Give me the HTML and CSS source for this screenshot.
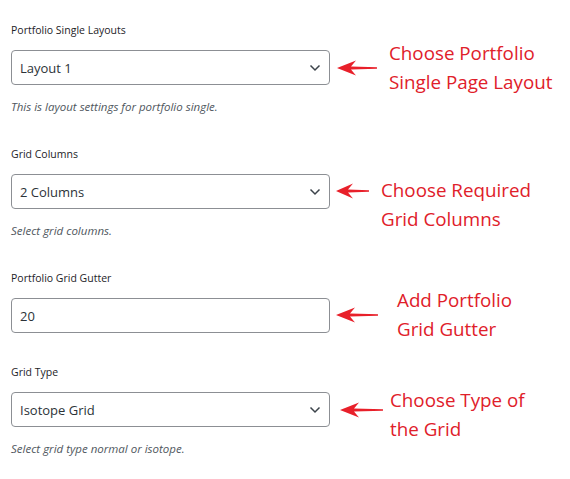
FILE: index.html
```html
<!DOCTYPE html>
<html lang="en">
<head>
  <meta charset="UTF-8" />
  <title>Portfolio Settings</title>
  <link rel="stylesheet" href="styles.css">
</head>
<body>

  <div class="settings">

    <div class="row row-layout">
      <div class="field">
        <label class="field-label">Portfolio Single Layouts</label>
        <div class="control">
          <span class="value">Layout 1</span>
          <svg class="chevron" width="12" height="8" viewBox="0 0 12 8"><path d="M1.5 1.5 L6 6 L10.5 1.5" fill="none" stroke="#3c434a" stroke-width="1.5"/></svg>
        </div>
        <p class="help">This is layout settings for portfolio single.</p>
      </div>
      <div class="note note-layout">
        <svg class="arrow" width="40" height="16" viewBox="0 0 40 16"><path d="M0 8 L19 0.5 L14 6.6 L40 7.2 L40 8.8 L14 9.4 L19 15.5 Z" fill="#e8202a"/></svg>
        <p>Choose Portfolio<br>Single Page Layout</p>
      </div>
    </div>

    <div class="row row-columns">
      <div class="field">
        <label class="field-label">Grid Columns</label>
        <div class="control">
          <span class="value">2 Columns</span>
          <svg class="chevron" width="12" height="8" viewBox="0 0 12 8"><path d="M1.5 1.5 L6 6 L10.5 1.5" fill="none" stroke="#3c434a" stroke-width="1.5"/></svg>
        </div>
        <p class="help">Select grid columns.</p>
      </div>
      <div class="note note-columns">
        <svg class="arrow" width="33" height="16" viewBox="0 0 33 16"><path d="M0 8 L17 0.5 L12 6.6 L33 7.2 L33 8.8 L12 9.4 L17 15.5 Z" fill="#e8202a"/></svg>
        <p>Choose Required<br>Grid Columns</p>
      </div>
    </div>

    <div class="row row-gutter">
      <div class="field">
        <label class="field-label">Portfolio Grid Gutter</label>
        <div class="control">
          <span class="value">20</span>
        </div>
      </div>
      <div class="note note-gutter">
        <svg class="arrow" width="42" height="16" viewBox="0 0 42 16"><path d="M0 8 L19 0.5 L14 6.6 L42 7.2 L42 8.8 L14 9.4 L19 15.5 Z" fill="#e8202a"/></svg>
        <p>Add Portfolio<br>Grid Gutter</p>
      </div>
    </div>

    <div class="row row-type">
      <div class="field">
        <label class="field-label">Grid Type</label>
        <div class="control">
          <span class="value">Isotope Grid</span>
          <svg class="chevron" width="12" height="8" viewBox="0 0 12 8"><path d="M1.5 1.5 L6 6 L10.5 1.5" fill="none" stroke="#3c434a" stroke-width="1.5"/></svg>
        </div>
        <p class="help">Select grid type normal or isotope.</p>
      </div>
      <div class="note note-type">
        <svg class="arrow" width="43" height="16" viewBox="0 0 43 16"><path d="M0 8 L19 0.5 L14 6.6 L43 7.2 L43 8.8 L14 9.4 L19 15.5 Z" fill="#e8202a"/></svg>
        <p>Choose Type of<br>the Grid</p>
      </div>
    </div>

  </div>

</body>
</html>
```

FILE: styles.css
```css
body {
  margin: 0;
  background: #fff;
  font-family: "Open Sans", "Noto Sans", Arial, sans-serif;
  color: #1d2327;
}
.settings {
  padding: 21px 0 0 11px;
}
.row {
  display: flex;
  align-items: flex-start;
}
.field {
  width: 319px;
  flex-shrink: 0;
}
.field-label {
  display: block;
  font-size: 10.5px;
  line-height: 18px;
  color: #1d2327;
}
.control {
  margin-top: 11px;
  height: 33px;
  border: 1px solid #8c8f94;
  border-radius: 4px;
  display: flex;
  align-items: center;
  justify-content: space-between;
  padding: 0 8px 0 8px;
}
.value {
  font-size: 13px;
  color: #2c3338;
}
.help {
  margin: 14px 0 0;
  font-size: 11.5px;
  font-style: italic;
  line-height: 16px;
  color: #50575e;
}
.row-layout { height: 124px; }
.row-columns { height: 124px; }
.row-gutter { height: 94px; }

.note {
  display: flex;
  align-items: center;
  color: #e0202a;
}
.note p {
  margin: 0;
  font-size: 18.8px;
  line-height: 29px;
  white-space: nowrap;
}
.arrow {
  margin-left: 7px;
}
.note-layout { margin-top: 18px; }
.note-layout p { margin-left: 12px; }
.note-columns { margin-top: 31px; }
.note-columns .arrow { margin-top: -29px; margin-left: 6px; }
.note-columns p { margin-left: 12px; }
.note-gutter { margin-top: 17px; }
.note-gutter .arrow { margin-left: 6px; }
.note-gutter p { margin-left: 19px; }
.note-type { margin-top: 23px; }
.note-type .arrow { margin-top: -10px; margin-left: 10px; }
.note-type p { margin-left: 7px; }
```
